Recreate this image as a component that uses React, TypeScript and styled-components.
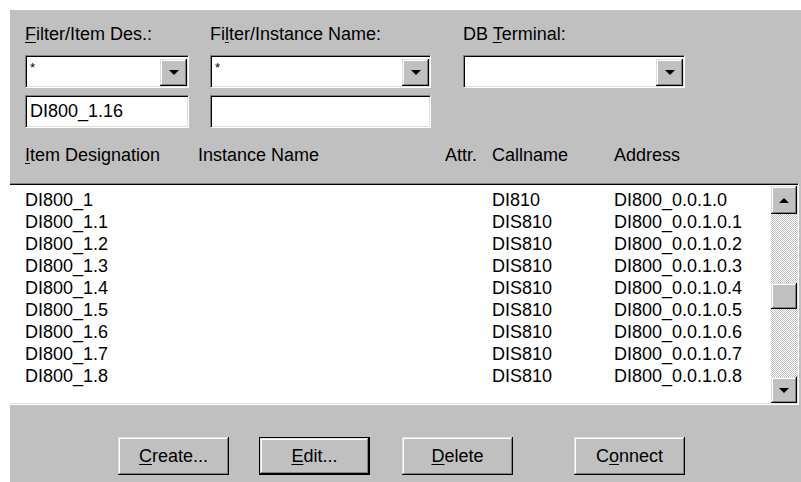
import styled, { createGlobalStyle } from "styled-components"

const GlobalStyle = createGlobalStyle`
  html, body {
    margin: 0;
    background: #fff;
  }
  body {
    font-family: "Liberation Sans", Arial, sans-serif;
  }
`

const Dialog = styled.div`
  margin: 10px 0 0 10px;
  width: 791px;
  height: 472px;
  background: #c0c0c0;
  overflow: hidden;
  font-size: 18px;
  color: #000;
  display: flex;
  flex-direction: column;
`

const FilterArea = styled.div`
  display: flex;
  padding: 14px 0 0 15px;
`

const FilterColumn = styled.div<{ $width: number; $offset?: number }>`
  width: ${p => p.$width}px;
  margin-left: ${p => p.$offset || 0}px;
  display: flex;
  flex-direction: column;
`

const FieldLabel = styled.div`
  height: 20px;
  line-height: 20px;
  margin-bottom: 11px;
  white-space: nowrap;
`

const Key = styled.span`
  text-decoration: underline;
  text-underline-offset: 2px;
`

const sunken = `
  box-sizing: border-box;
  border: 1px solid;
  border-color: #808080 #fff #fff #808080;
  box-shadow: inset 1px 1px 0 #000, inset -1px -1px 0 #dfdfdf;
  background: #fff;
`

const raised = `
  box-sizing: border-box;
  background: #c0c0c0;
  box-shadow: inset -1px -1px 0 #000, inset 1px 1px 0 #dfdfdf,
    inset -2px -2px 0 #808080, inset 2px 2px 0 #fff;
`

const Combo = styled.div`
  ${sunken}
  height: 33px;
  display: flex;
  align-items: flex-start;
  justify-content: space-between;
  padding: 2px 1px 0 2px;
`

const ComboValue = styled.span`
  font-size: 13px;
  line-height: 14px;
  padding: 3px 0 0 2px;
`

const DropButton = styled.div`
  ${raised}
  width: 27px;
  height: 27px;
  margin-top: 1px;
  display: flex;
  align-items: center;
  justify-content: center;
`

const Arrow = styled.span<{ $up?: boolean }>`
  width: 0;
  height: 0;
  border-left: 5px solid transparent;
  border-right: 5px solid transparent;
  ${p => (p.$up ? "border-bottom: 5px solid #000;" : "border-top: 5px solid #000;")}
`

const TextBox = styled.div`
  ${sunken}
  height: 33px;
  margin-top: 7px;
  padding: 0 0 0 4px;
  line-height: 31px;
`

const columns = "173px 247px 47px 122px 1fr"

const HeaderRow = styled.div`
  display: grid;
  grid-template-columns: ${columns};
  height: 20px;
  line-height: 20px;
  margin-top: 17px;
  padding-left: 15px;
  white-space: nowrap;
`

const ListBox = styled.div`
  box-sizing: border-box;
  margin-top: 18px;
  margin-right: 2px;
  height: 222px;
  border-top: 1px solid #808080;
  border-right: 1px solid #fff;
  border-bottom: 1px solid #fff;
  box-shadow: inset 0 1px 0 #000, inset -1px -1px 0 #dfdfdf;
  background: #fff;
  padding: 2px 1px 1px 0;
  display: flex;
`

const Rows = styled.div`
  flex: 1;
  padding-top: 3px;
`

const Row = styled.div`
  display: grid;
  grid-template-columns: ${columns};
  height: 22px;
  line-height: 22px;
  padding-left: 15px;
  white-space: nowrap;
`

const ScrollBar = styled.div`
  width: 26px;
  display: flex;
  flex-direction: column;
`

const ScrollButton = styled.div<{ $h: number }>`
  ${raised}
  height: ${p => p.$h}px;
  display: flex;
  align-items: center;
  justify-content: center;
  flex-shrink: 0;
`

const Track = styled.div`
  flex: 1;
  background-image: repeating-conic-gradient(#c0c0c0 0% 25%, #fff 0% 50%);
  background-size: 2px 2px;
`

const Thumb = styled.div<{ $top: number }>`
  ${raised}
  height: 26px;
  margin-top: ${p => p.$top}px;
`

const ButtonRow = styled.div`
  display: flex;
  margin-top: 32px;
  padding-left: 108px;
`

const PushButton = styled.div<{ $gap?: number; $default?: boolean }>`
  ${raised}
  width: 111px;
  height: 38px;
  margin-left: ${p => p.$gap || 0}px;
  display: flex;
  align-items: center;
  justify-content: center;
  line-height: 20px;
  ${p => p.$default && "border: 1px solid #000;"}
`

const items = [
  { name: "DI800_1", call: "DI810", addr: "DI800_0.0.1.0" },
  ...Array.from({ length: 8 }, (_, i) => ({
    name: `DI800_1.${i + 1}`,
    call: "DIS810",
    addr: `DI800_0.0.1.0.${i + 1}`,
  })),
]

const App = () => {
  return (
    <>
      <GlobalStyle />
      <Dialog>
        <FilterArea>
          <FilterColumn $width={164}>
            <FieldLabel><Key>F</Key>ilter/Item Des.:</FieldLabel>
            <Combo>
              <ComboValue>*</ComboValue>
              <DropButton><Arrow /></DropButton>
            </Combo>
            <TextBox>DI800_1.16</TextBox>
          </FilterColumn>
          <FilterColumn $width={221} $offset={21}>
            <FieldLabel>Fi<Key>l</Key>ter/Instance Name:</FieldLabel>
            <Combo>
              <ComboValue>*</ComboValue>
              <DropButton><Arrow /></DropButton>
            </Combo>
            <TextBox />
          </FilterColumn>
          <FilterColumn $width={222} $offset={32}>
            <FieldLabel>DB <Key>T</Key>erminal:</FieldLabel>
            <Combo>
              <ComboValue />
              <DropButton><Arrow /></DropButton>
            </Combo>
          </FilterColumn>
        </FilterArea>

        <HeaderRow>
          <span><Key>I</Key>tem Designation</span>
          <span>Instance Name</span>
          <span>Attr.</span>
          <span>Callname</span>
          <span>Address</span>
        </HeaderRow>

        <ListBox>
          <Rows>
            {items.map(item => (
              <Row key={item.name}>
                <span>{item.name}</span>
                <span />
                <span />
                <span>{item.call}</span>
                <span>{item.addr}</span>
              </Row>
            ))}
          </Rows>
          <ScrollBar>
            <ScrollButton $h={28}><Arrow $up /></ScrollButton>
            <Track>
              <Thumb $top={69} />
            </Track>
            <ScrollButton $h={26}><Arrow /></ScrollButton>
          </ScrollBar>
        </ListBox>

        <ButtonRow>
          <PushButton><span><Key>C</Key>reate...</span></PushButton>
          <PushButton $gap={30} $default><span><Key>E</Key>dit...</span></PushButton>
          <PushButton $gap={32}><span><Key>D</Key>elete</span></PushButton>
          <PushButton $gap={61}><span>C<Key>o</Key>nnect</span></PushButton>
        </ButtonRow>
      </Dialog>
    </>
  )
}

export default App
